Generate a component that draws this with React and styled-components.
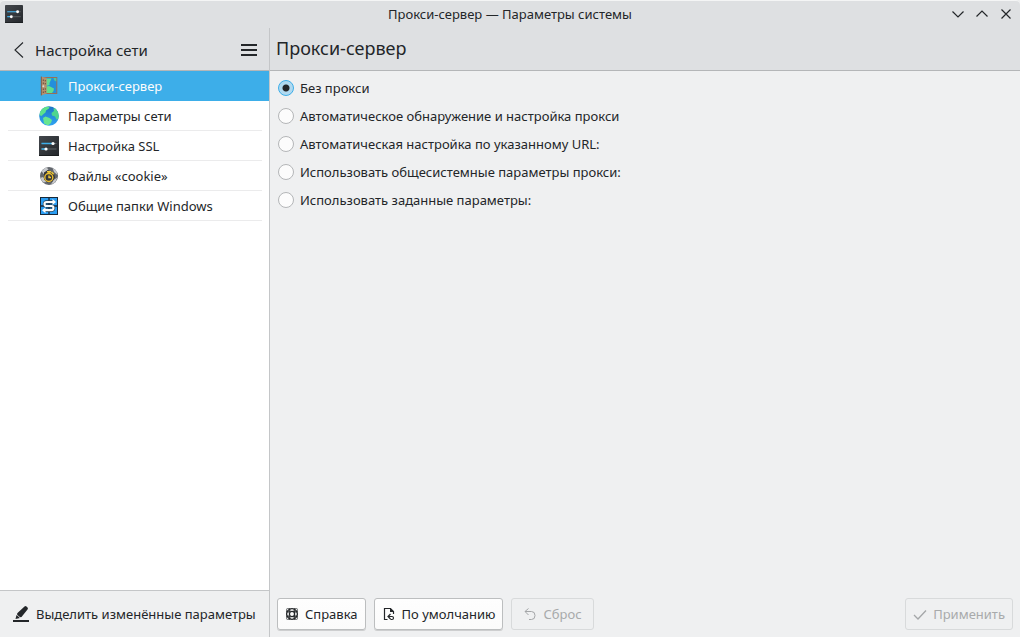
import React, { useState } from "react";
import styled, { createGlobalStyle } from "styled-components";

const GlobalStyle = createGlobalStyle`
  *, *::before, *::after { box-sizing: border-box; }
  body { margin: 0; background: #eff0f1; }
  body, button, input {
    font-family: "Noto Sans", "Open Sans", sans-serif;
    font-size: 13px;
    line-height: 18px;
    color: #232629;
  }
`;

const Window = styled.div`
  display: flex;
  flex-direction: column;
  min-height: 100vh;
  background: #eff0f1;
`;

const TitleBar = styled.header`
  display: grid;
  grid-template-columns: 80px 1fr 80px;
  align-items: center;
  height: 28px;
  padding: 0 4px 1px;
  background: #dee0e2;
  box-shadow: inset 0 1px 0 #f4f5f5;
  border-radius: 4px 4px 0 0;
`;

const AppIcon = styled.div`
  display: flex;
  padding-left: 1px;
`;

const WindowTitle = styled.div`
  text-align: center;
`;

const WindowControls = styled.div`
  display: flex;
  justify-content: flex-end;
  gap: 4px;
`;

const IconButton = styled.button`
  display: flex;
  align-items: center;
  justify-content: center;
  width: ${(p) => p.$size}px;
  height: ${(p) => p.$size}px;
  padding: 0;
  border: 0;
  background: transparent;
`;

const Body = styled.div`
  display: grid;
  grid-template-columns: 270px 1fr;
  flex: 1;
`;

const Sidebar = styled.aside`
  display: flex;
  flex-direction: column;
  background: #ffffff;
  border-right: 1px solid #c4c6c8;
`;

const Main = styled.main`
  display: flex;
  flex-direction: column;
  min-width: 0;
`;

const PaneHeader = styled.div`
  display: flex;
  align-items: center;
  height: 43px;
  background: #dee0e2;
  border-bottom: 1px solid #b4b6b8;
`;

const SidebarHeader = styled(PaneHeader)`
  padding: 2px 0 0 4px;
`;

const SidebarTitle = styled.h2`
  flex: 1;
  margin: 0 0 0 1px;
  font-size: 15px;
  line-height: 20px;
  font-weight: 400;
`;

const PageTitle = styled.h1`
  margin: 0;
  padding: 0 6px 2px;
  font-size: 18px;
  line-height: 24px;
  font-weight: 400;
`;

const NavList = styled.nav`
  display: flex;
  flex-direction: column;
  flex: 1;
`;

const NavItem = styled.a`
  display: flex;
  align-items: center;
  gap: 9px;
  height: 30px;
  padding-left: 39px;
  text-decoration: none;
  color: ${(p) => (p.$active ? "#fcfcfc" : "#232629")};
  background: ${(p) =>
    p.$active
      ? "#3daee9"
      : "linear-gradient(#ebebec, #ebebec) 8px 100% / calc(100% - 15px) 1px no-repeat"};
`;

const SidebarFooter = styled.div`
  display: flex;
  align-items: center;
  height: 47px;
  padding-left: 13px;
  background: #eff0f1;
  border-top: 1px solid #c4c6c8;
`;

const FlatButton = styled.button`
  display: flex;
  align-items: center;
  gap: 7px;
  padding: 0;
  border: 0;
  background: transparent;
  white-space: nowrap;
`;

const Options = styled.div`
  display: flex;
  flex-direction: column;
  align-items: flex-start;
  gap: 10px;
  flex: 1;
  padding: 8px;
`;

const OptionLabel = styled.label`
  display: flex;
  align-items: center;
  gap: 6px;
  height: 18px;
`;

const Radio = styled.input`
  appearance: none;
  width: 16px;
  height: 16px;
  margin: 0;
  border: 1px solid #b4b6b8;
  border-radius: 50%;
  background: #fcfcfc;

  &:checked {
    border-color: #3daee9;
    background: radial-gradient(circle, #232629 0 3px, #b0d9f0 4px);
  }
`;

const ButtonBar = styled.footer`
  display: flex;
  gap: 8px;
  padding: 8px 7px 7px;
`;

const PushButton = styled.button`
  display: flex;
  align-items: center;
  gap: 6px;
  height: 32px;
  padding: 0 7px;
  border: 1px solid #bcbebf;
  border-radius: 3px;
  background: linear-gradient(#fefefe, #fbfbfb);
  box-shadow: 0 1px 0 rgba(0, 0, 0, 0.14);
  white-space: nowrap;

  &:disabled {
    padding: 0 11px;
    color: #a8aaab;
    border-color: #d8dadb;
    background: #eff0f1;
    box-shadow: none;
  }

  &:last-child {
    margin-left: auto;
    padding: 0 7px;
  }
`;

const Line = ({ size, d, width = 1, box = size, color = "#232629" }) => (
  <svg width={size} height={size} viewBox={`0 0 ${box} ${box}`} fill="none" stroke={color} strokeWidth={width} aria-hidden="true">
    <path d={d} />
  </svg>
);

const SlidersIcon = ({ size }) => (
  <svg width={size} height={size} viewBox="0 0 20 20" aria-hidden="true">
    <defs>
      <linearGradient id={`panel${size}`} x1="0" y1="0" x2="1" y2="1">
        <stop offset="0" stopColor="#43474c" />
        <stop offset="1" stopColor="#24272b" />
      </linearGradient>
    </defs>
    <rect width="20" height="20" rx="0.5" fill={`url(#panel${size})`} />
    <path d="M0 19.5h20" stroke="#1b1e20" />
    <path d="M2.5 7.5h15M2.5 13h15" stroke="#5d6468" />
    <path d="M2.5 7.5h11M2.5 13h4" stroke="#3daee9" strokeWidth="1.3" />
    <circle cx="14" cy="7.5" r="1.6" fill="#fcfcfc" />
    <circle cx="7" cy="13" r="1.6" fill="#fcfcfc" />
  </svg>
);

const ProxyIcon = () => (
  <svg width="20" height="20" viewBox="0 0 20 20" aria-hidden="true">
    <rect x="2" y="1" width="16.300" height="17" fill="#96705a" />
    <rect x="7" y="2" width="10.300" height="15" fill="#238fdc" />
    <path d="M7 2.500h5.500L10.500 7v2L7 10z" fill="#5fdc94" />
    <path d="M7 10.500l3-.5 5 2.500-.5 2.500-1.500 2H7z" fill="#5fe08e" />
    <path d="M14.500 2h2.800v3.500l-2-1z" fill="#49c9a0" />
    <path d="M2 .5 7.700 2v15.500L2 19.500z" fill="#b5906f" />
    <path d="M2.300 .6v18.800" stroke="#6f5040" strokeWidth="0.800" />
    <path d="M4.300 3.500V5M6.300 4v1.400M4.300 6.500V8M6.300 7v1.400M4.300 12.500V14M6.300 12.300v1.400M4.300 15.500V17M6.300 15v1.400" stroke="#6a4e3e" />
    <circle cx="4.300" cy="10.300" r="1" fill="#d8d7d2" />
  </svg>
);

const GlobeIcon = () => (
  <svg width="20" height="20" viewBox="0 0 20 20" aria-hidden="true">
    <defs>
      <linearGradient id="sea" x1="0" y1="0" x2="0" y2="1">
        <stop offset="0" stopColor="#1d75c5" />
        <stop offset="1" stopColor="#2fa4f2" />
      </linearGradient>
      <clipPath id="globe"><circle cx="10" cy="10" r="9.800" /></clipPath>
    </defs>
    <g clipPath="url(#globe)">
      <rect width="20" height="20" fill="url(#sea)" />
      <path d="M0 9 2 3l4-2.500 4.500.3-.5 1.700-3 2-.5 2-2.500 2L2.500 10z" fill="#5ce28b" />
      <path d="M4 12l2.500-1.500 4 1.500 2.500 2-1 3-3 2.500-4-2z" fill="#67e58f" />
      <path d="M14.500 2.500l2-.5L20 7v6l-2.500.5-1.500-3-3-1-.5-2.500 2.500-2z" fill="#4fd58f" />
    </g>
  </svg>
);

const CookieIcon = () => (
  <svg width="20" height="20" viewBox="0 0 20 20" aria-hidden="true">
    <circle cx="10" cy="10" r="9" fill="#62666c" />
    <path d="M2.500 5 7 1.300l2.500 2L4.500 8zM1.200 12l3 4.500 3-.5L4 11zM12 18.500l4-2 2.500-5-4 2.500zM13.500 1.800l4 3.200 1 4-3.500-3z" fill="#c6c8cb" />
    <path d="M5 6.500 9 4l6 3.500 1 4-2.500 4-5 1-3.500-3z" fill="#35363a" />
    <circle cx="9.800" cy="11.500" r="4" fill="none" stroke="#e9bd2d" strokeWidth="1.400" />
    <path d="M8 5.700h4M10 6v1.500M12.500 6l2.200 2.200M10 9.500v2h2" fill="none" stroke="#f1cb3c" strokeWidth="1.400" />
  </svg>
);

const SambaIcon = () => (
  <svg width="20" height="20" viewBox="0 0 20 20" aria-hidden="true">
    <rect x="1" y="1" width="18" height="18" fill="#17293a" />
    <path d="M2 2h7.300v7.300H2zM10.700 2H18v7.300h-7.300zM2 10.700h7.300V18H2zM10.700 10.700H18V18h-7.300z" fill="#2b9df2" />
    <path d="M14.500 6H7.500q-2 0-2 2t2 2h5q2 0 2 2t-2 2.200H5.500" fill="none" stroke="#20394d" strokeWidth="3.400" />
    <path d="M14 6H7.500q-2 0-2 2t2 2h5q2 0 2 2t-2 2.200H6" fill="none" stroke="#fcfcfc" strokeWidth="2.200" />
    <path d="M13.500 3l3.500 3-3.500 3zM6.500 11.200l-3.500 3 3.500 3z" fill="#fcfcfc" />
  </svg>
);

const HighlightIcon = () => (
  <svg width="16" height="16" viewBox="0 0 16 16" fill="#232629" aria-hidden="true">
    <path d="M0 14h16v2H0z" />
    <path d="M2.500 13 3.500 9l3.500 3zM4.500 7 11.500.5q1-.8 2 0l1 1q.8 1 0 2L8.500 11q-2 .5-3.500-1t-.5-3z" />
    <path d="M3.500 8.500 7.500 12" stroke="#eff0f1" strokeWidth="0.500" />
  </svg>
);

const HelpIcon = () => (
  <svg width="14" height="14" viewBox="0 0 14 14" fill="none" stroke="#232629" aria-hidden="true">
    <circle cx="7" cy="7" r="5.400" strokeWidth="1.300" />
    <circle cx="7" cy="7" r="2.600" strokeWidth="1.300" />
    <path d="M4.800 1.500v3.300M9.200 1.500v3.300M4.800 9.200v3.300M9.200 9.200v3.300M1.500 4.800h3.300M9.200 4.800h3.300M1.500 9.200h3.300M9.200 9.200h3.300" strokeWidth="1.200" />
    <path d="M1.500 4.800V2.500q0-1 1-1h2.300M9.200 1.500h2.300q1 0 1 1v2.300M12.500 9.200v2.300q0 1-1 1H9.200M4.800 12.500H2.500q-1 0-1-1V9.200" strokeWidth="0.600" />
  </svg>
);

const DefaultsIcon = () => (
  <svg width="14" height="14" viewBox="0 0 14 14" fill="none" stroke="#232629" aria-hidden="true">
    <path d="M5.500 12.500h-3v-11h6l3 3V7" strokeWidth="1.200" />
    <path d="M8 1v4h4z" fill="#232629" stroke="none" />
    <path d="M8.500 7 6 9.500 8.500 12M6.500 9.500H10q1.500 0 1.500 1.500T10 12.500H8.500" strokeWidth="1.200" />
  </svg>
);

const sections = [
  ["Прокси-сервер", <ProxyIcon key="i" />],
  ["Параметры сети", <GlobeIcon key="i" />],
  ["Настройка SSL", <SlidersIcon key="i" size={20} />],
  ["Файлы «cookie»", <CookieIcon key="i" />],
  ["Общие папки Windows", <SambaIcon key="i" />],
];

const proxyModes = [
  "Без прокси",
  "Автоматическое обнаружение и настройка прокси",
  "Автоматическая настройка по указанному URL:",
  "Использовать общесистемные параметры прокси:",
  "Использовать заданные параметры:",
];

export default function App() {
  const [mode, setMode] = useState(0);

  return (
    <Window>
      <GlobalStyle />
      <TitleBar>
        <AppIcon><SlidersIcon size={18} /></AppIcon>
        <WindowTitle>Прокси-сервер — Параметры системы</WindowTitle>
        <WindowControls>
          <IconButton $size={20} aria-label="Свернуть"><Line size={12} d="M.5 3.500 6 9l5.500-5.500" width={1.2} /></IconButton>
          <IconButton $size={20} aria-label="Развернуть"><Line size={12} d="M.5 8.500 6 3l5.500 5.500" width={1.2} /></IconButton>
          <IconButton $size={20} aria-label="Закрыть"><Line size={12} d="M1.500 1.500l9 9M10.500 1.500l-9 9" width={1.2} /></IconButton>
        </WindowControls>
      </TitleBar>
      <Body>
        <Sidebar>
          <SidebarHeader>
            <IconButton $size={30} aria-label="Назад"><Line size={18} d="M13 1.500 5 9l8 7.500" width={1.1} /></IconButton>
            <SidebarTitle>Настройка сети</SidebarTitle>
            <IconButton $size={40} aria-label="Меню"><Line size={16} d="M0 3h16M0 8h16M0 13h16" width={2} /></IconButton>
          </SidebarHeader>
          <NavList aria-label="Настройка сети">
            {sections.map(([name, icon], i) => (
              <NavItem key={name} href="#" $active={i === 0} aria-current={i === 0 ? "page" : undefined}>
                {icon}
                {name}
              </NavItem>
            ))}
          </NavList>
          <SidebarFooter>
            <FlatButton><HighlightIcon />Выделить изменённые параметры</FlatButton>
          </SidebarFooter>
        </Sidebar>
        <Main>
          <PaneHeader><PageTitle>Прокси-сервер</PageTitle></PaneHeader>
          <Options role="radiogroup" aria-label="Прокси-сервер">
            {proxyModes.map((label, i) => (
              <OptionLabel key={label}>
                <Radio type="radio" name="proxy" checked={mode === i} onChange={() => setMode(i)} />
                {label}
              </OptionLabel>
            ))}
          </Options>
          <ButtonBar>
            <PushButton><HelpIcon />Справка</PushButton>
            <PushButton><DefaultsIcon />По умолчанию</PushButton>
            <PushButton disabled><Line size={14} d="M5.500 1.500 2 4.500 5.500 8M2 4.500h6.500q3.500 0 3.500 4t-3.500 4H6" color="#a4a6a8" />Сброс</PushButton>
            <PushButton disabled><Line size={14} d="M1 8l4 4 8-8.500" width={1.3} color="#a4a6a8" />Применить</PushButton>
          </ButtonBar>
        </Main>
      </Body>
    </Window>
  );
}
